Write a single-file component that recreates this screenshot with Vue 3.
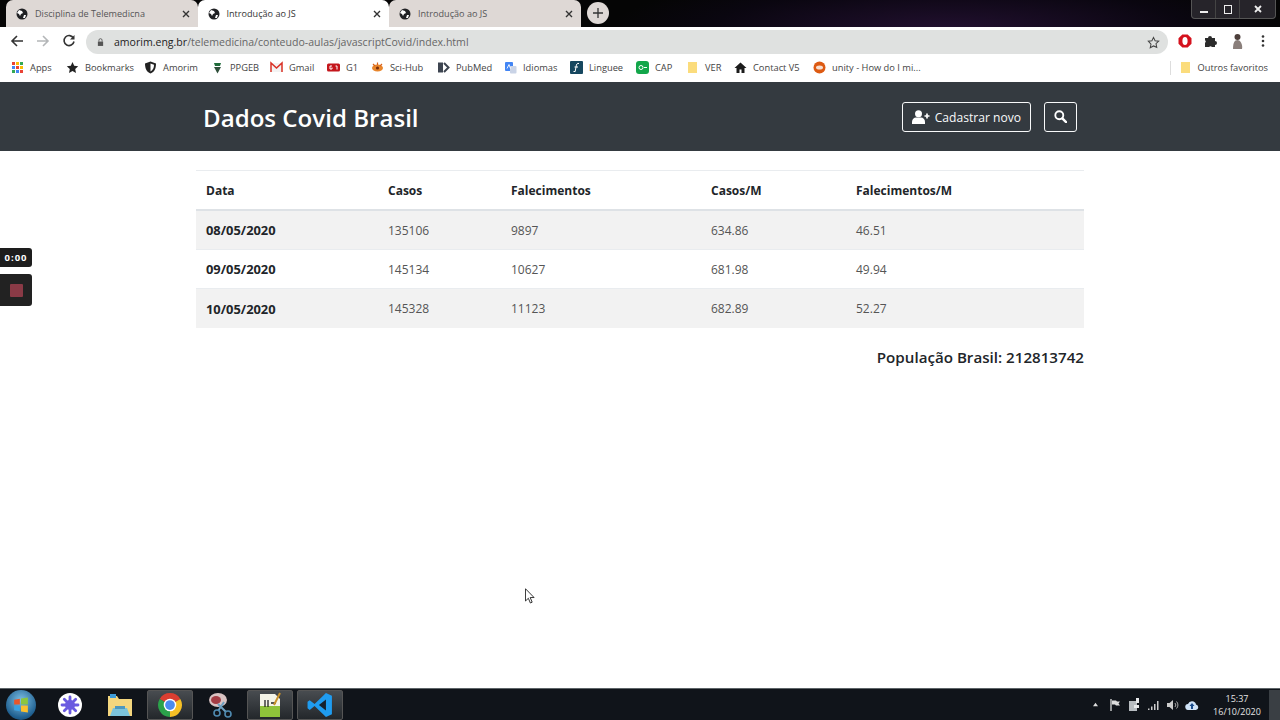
<script setup>
const tabs = [
  { title: 'Disciplina de Telemedicna', active: false },
  { title: 'Introdução ao JS', active: true },
  { title: 'Introdução ao JS', active: false },
];

const bookmarks = ['Apps', 'Bookmarks', 'Amorim', 'PPGEB', 'Gmail', 'G1', 'Sci-Hub', 'PubMed', 'Idiomas', 'Linguee', 'CAP', 'VER', 'Contact V5', 'unity - How do I mi...'];

const columns = ['Data', 'Casos', 'Falecimentos', 'Casos/M', 'Falecimentos/M'];

const rows = [
  { date: '08/05/2020', cases: 135106, deaths: 9897, casesM: '634.86', deathsM: '46.51' },
  { date: '09/05/2020', cases: 145134, deaths: 10627, casesM: '681.98', deathsM: '49.94' },
  { date: '10/05/2020', cases: 145328, deaths: 11123, casesM: '682.89', deathsM: '52.27' },
];
</script>

<template>
  <div class="screen">
    <div class="tabstrip">
      <div v-for="tab in tabs" :key="tab.title + tab.active" class="tab" :class="{ active: tab.active }">
        <svg class="globe" viewBox="0 0 12 12">
          <circle cx="6" cy="6" r="5.5" fill="#202124" />
          <path d="M3 2l3 1 1 2-2 1-1 2-1-2-2-1zM8 7l2 0-1 3-2 0z" fill="#fff" />
        </svg>
        <span class="tab-title">{{ tab.title }}</span>
        <svg class="tab-x" viewBox="0 0 8 8"><path d="M1 1l6 6M7 1l-6 6" stroke="#333" stroke-width="1.4" /></svg>
      </div>
      <div class="newtab">
        <svg viewBox="0 0 10 10" width="10" height="10"><path d="M5 0v10M0 5h10" stroke="#333" stroke-width="1.3" /></svg>
      </div>
      <div class="winctl">
        <span class="winbtn"><i class="min"></i></span>
        <span class="winbtn"><i class="max"></i></span>
        <span class="winbtn close">
          <svg viewBox="0 0 8 8" width="8" height="8"><path d="M1 1l6 6M7 1l-6 6" stroke="#eee" stroke-width="1.8" /></svg>
        </span>
      </div>
    </div>

    <div class="toolbar">
      <div class="nav-tools">
        <svg class="tool" viewBox="0 0 14 14"><path d="M13 7H2M7 2L2 7l5 5" fill="none" stroke="#333" stroke-width="1.6" /></svg>
        <svg class="tool" viewBox="0 0 14 14"><path d="M1 7h11M7 2l5 5-5 5" fill="none" stroke="#b4b6b8" stroke-width="1.6" /></svg>
        <svg class="tool" viewBox="0 0 14 14"><path d="M11.5 4.2A5 5 0 1 0 12 7.5" fill="none" stroke="#333" stroke-width="1.6" /><path d="M12.5 1v4.5H8z" fill="#333" /></svg>
      </div>
      <div class="omnibox">
        <svg class="lock" viewBox="0 0 8 10"><path d="M1 4.5h6v5H1z" fill="#555" /><path d="M2.2 4.5V3a1.8 1.8 0 0 1 3.6 0v1.5" fill="none" stroke="#555" /></svg>
        <span class="url"><b>amorim.eng.br</b>/telemedicina/conteudo-aulas/javascriptCovid/index.html</span>
        <svg class="star" viewBox="0 0 14 14"><path d="M7 1.5l1.7 3.6 3.9.5-2.9 2.7.8 3.9L7 10.7l-3.5 1.9.8-3.9L1.4 5.6l3.9-.5z" fill="none" stroke="#444" stroke-width="1.1" /></svg>
      </div>
      <div class="extensions">
        <svg viewBox="0 0 14 14" width="14" height="14">
          <path d="M4.3.5h5.4l3.8 3.8v5.4l-3.8 3.8H4.3L.5 9.700V4.300z" fill="#d5121e" />
          <ellipse cx="7" cy="7" rx="2.6" ry="4" fill="#fff" />
        </svg>
        <svg viewBox="0 0 14 14" width="14" height="14">
          <path d="M1 4h3a2 2 0 0 1 4 0h3v3a2 2 0 0 1 0 4v2H8a2 2 0 0 0-3 0H1V9a2 2 0 0 0 0-3z" fill="#2b2b2b" />
        </svg>
        <svg viewBox="0 0 14 16" width="14" height="16">
          <circle cx="7.500" cy="4" r="3" fill="#4d3f3b" />
          <path d="M3 16c0-6 1.500-9 4.500-9S13 12 12 16z" fill="#8a7f7b" />
        </svg>
        <svg viewBox="0 0 14 14" width="14" height="14"><circle cx="7" cy="2.500" r="1.300" fill="#333" /><circle cx="7" cy="7" r="1.300" fill="#333" /><circle cx="7" cy="11.500" r="1.300" fill="#333" /></svg>
      </div>
    </div>

    <div class="bookmarks">
      <div class="bm-list">
        <div v-for="(name, i) in bookmarks" :key="name" class="bm">
          <svg viewBox="0 0 13 13" width="13" height="13">
            <g v-if="i === 0">
              <rect x="1" y="1" width="3" height="3" fill="#ea4335" /><rect x="5" y="1" width="3" height="3" fill="#fbbc04" /><rect x="9" y="1" width="3" height="3" fill="#34a853" />
              <rect x="1" y="5" width="3" height="3" fill="#4285f4" /><rect x="5" y="5" width="3" height="3" fill="#ea4335" /><rect x="9" y="5" width="3" height="3" fill="#fbbc04" />
              <rect x="1" y="9" width="3" height="3" fill="#34a853" /><rect x="5" y="9" width="3" height="3" fill="#4285f4" /><rect x="9" y="9" width="3" height="3" fill="#ea4335" />
            </g>
            <path v-else-if="i === 1" d="M6.500 1l1.700 3.700 4 .5-3 2.700.8 4-3.500-2-3.500 2 .8-4-3-2.700 4-.5z" fill="#222" />
            <g v-else-if="i === 2">
              <path d="M6.500.5l5.500 2c0 5-1.500 8.500-5.500 10-4-1.500-5.500-5-5.500-10z" fill="#222" />
              <path d="M6.500 2.500l3.500 1.200c0 3-1 5.500-3.500 6.800z" fill="#fff" />
            </g>
            <g v-else-if="i === 3">
              <path d="M3 2h7l-1 3H4z" fill="#1f6b3a" /><path d="M3 6h7l-3.500 6.500z" fill="#2f4f3a" />
            </g>
            <g v-else-if="i === 4">
              <rect x="1" y="2" width="11" height="9" fill="#f3f3f3" />
              <path d="M1 11V2l5.500 5L12 2v9" fill="none" stroke="#d93025" stroke-width="1.500" />
            </g>
            <g v-else-if="i === 5">
              <rect y="2.500" width="13" height="8" rx="1.500" fill="#c4161c" />
              <path d="M5 5H3v3h2V6.500M8.500 5h1.500v3.500" fill="none" stroke="#fff" stroke-width="1" />
            </g>
            <g v-else-if="i === 6">
              <ellipse cx="6.500" cy="7" rx="5.500" ry="3.500" fill="#e8862c" />
              <circle cx="6.500" cy="7" r="1.600" fill="#7a2e0a" />
              <path d="M2 3l2 2M6.500 1.500v2.500M11 3L9 5" stroke="#d8621a" stroke-width="1.200" />
            </g>
            <g v-else-if="i === 7">
              <path d="M1 1.500h5v10H1z" fill="#3d4450" />
              <path d="M7 2l4.500 4.500L7 11" fill="none" stroke="#3d4450" stroke-width="2" />
            </g>
            <g v-else-if="i === 8">
              <rect x="1" y="1" width="8" height="9" rx="1" fill="#4285f4" />
              <rect x="6" y="5" width="6.500" height="7.500" rx="1" fill="#c9d3e6" />
              <path d="M3 7.500l2-4 1.500 4" fill="none" stroke="#fff" stroke-width=".9" />
            </g>
            <g v-else-if="i === 9">
              <rect width="13" height="13" rx="1" fill="#16475f" />
              <path d="M9 2.500C7 2 6.500 3 6 6l-.8 4.500H3.500M4.500 6h3.500" fill="none" stroke="#fff" stroke-width="1" />
            </g>
            <g v-else-if="i === 10">
              <rect width="13" height="13" rx="3" fill="#12a64a" />
              <circle cx="5" cy="6.500" r="2" fill="none" stroke="#fff" />
              <path d="M8 6.500h3" stroke="#fff" />
            </g>
            <path v-else-if="i === 11" d="M2 1h9v11H2z" fill="#fbdc7c" />
            <path v-else-if="i === 12" d="M6.500 1.500L.5 7h2v5h3V8.500h2V12h3V7h2z" fill="#1c1c1c" />
            <g v-else>
              <circle cx="6.500" cy="6.500" r="6" fill="#dd5a12" />
              <ellipse cx="6.500" cy="6.500" rx="3.500" ry="2" fill="#fff" opacity=".8" />
            </g>
          </svg>
          <span>{{ name }}</span>
        </div>
      </div>
      <div class="bm other">
        <svg viewBox="0 0 13 13" width="13" height="13"><path d="M2 1h9v11H2z" fill="#fbdc7c" /></svg>
        <span>Outros favoritos</span>
      </div>
    </div>

    <header class="navbar">
      <h1 class="brand">Dados Covid Brasil</h1>
      <div class="actions">
        <button class="btn">
          <svg viewBox="0 0 18 14" width="18" height="14">
            <circle cx="6.500" cy="3.700" r="3.500" fill="#fff" />
            <path d="M0 14v-2c0-3 2-4.500 4-4.500h5c2 0 4 1.500 4 4.500v2z" fill="#fff" />
            <path d="M15 3.500v5M12.500 6h5" stroke="#fff" stroke-width="1.700" />
          </svg>
          Cadastrar novo
        </button>
        <button class="btn icon">
          <svg viewBox="0 0 14 14" width="13" height="13">
            <circle cx="5.700" cy="5.700" r="4.300" fill="none" stroke="#fff" stroke-width="2" />
            <path d="M9 9l4 4" stroke="#fff" stroke-width="2.500" stroke-linecap="round" />
          </svg>
        </button>
      </div>
    </header>

    <main class="content">
      <table class="table">
        <colgroup>
          <col class="col-date" /><col class="col-cases" /><col class="col-deaths" /><col class="col-cases-m" /><col class="col-deaths-m" />
        </colgroup>
        <thead>
          <tr><th v-for="c in columns" :key="c">{{ c }}</th></tr>
        </thead>
        <tbody>
          <tr v-for="row in rows" :key="row.date">
            <th>{{ row.date }}</th>
            <td>{{ row.cases }}</td>
            <td>{{ row.deaths }}</td>
            <td>{{ row.casesM }}</td>
            <td>{{ row.deathsM }}</td>
          </tr>
        </tbody>
      </table>
      <h5 class="population">População Brasil: 212813742</h5>
    </main>

    <div class="taskbar">
      <div class="orb">
        <svg viewBox="0 0 14 14" width="16" height="16">
          <path d="M1 2.500l5-1v5H1z" fill="#e8562a" /><path d="M7 1.300l6-.8V6.500H7z" fill="#8cc63f" />
          <path d="M1 7.500h5v5l-5-1z" fill="#3aa0e0" /><path d="M7 7.500h6v6l-6-.8z" fill="#fbc02d" />
        </svg>
      </div>
      <div class="task">
        <svg viewBox="0 0 24 24" width="24" height="24">
          <circle cx="12" cy="12" r="12" fill="#fff" />
          <circle cx="12" cy="12" r="5" fill="#6a5ae0" />
          <path d="M12 4v16M4 12h16M6.300 6.300l11.400 11.400M17.700 6.300L6.300 17.700" stroke="#6a5ae0" stroke-width="2.800" stroke-linecap="round" />
        </svg>
      </div>
      <div class="task">
        <svg viewBox="0 0 26 24" width="26" height="24">
          <path d="M1 3h9l2 3h13v17H1z" fill="#f3d67e" />
          <rect x="3" y="1" width="6" height="4" fill="#3d9bd8" />
          <path d="M6 15h14l3 8H3z" fill="#7cc4dc" />
          <rect x="8" y="13" width="10" height="3" fill="#4c97bf" />
        </svg>
      </div>
      <div class="task open">
        <svg viewBox="0 0 24 24" width="26" height="26">
          <path d="M12 12L2.470 6.500A11 11 0 0 1 21.530 6.500z" fill="#dc3e31" />
          <path d="M12 12L21.530 6.500A11 11 0 0 1 12 23z" fill="#f6c026" />
          <path d="M12 12L12 23A11 11 0 0 1 2.470 6.500z" fill="#2ba24a" />
          <circle cx="12" cy="12" r="5.800" fill="#fff" />
          <circle cx="12" cy="12" r="4.500" fill="#4a8bf0" />
        </svg>
      </div>
      <div class="task">
        <svg viewBox="0 0 24 26" width="24" height="26">
          <ellipse cx="10" cy="8" rx="9" ry="7" fill="#d8c2c2" />
          <ellipse cx="8" cy="8" rx="5" ry="4" fill="#a33c44" />
          <path d="M10 12l8 8M16 10l-6 9" stroke="#6d9fbf" stroke-width="2" />
          <circle cx="9" cy="21" r="3" fill="none" stroke="#4f8ab0" stroke-width="1.600" />
          <circle cx="20" cy="22" r="3" fill="none" stroke="#4f8ab0" stroke-width="1.600" />
        </svg>
      </div>
      <div class="task open">
        <svg viewBox="0 0 24 26" width="24" height="26">
          <path d="M2 2h15l5 5v18H2z" fill="#f4f4e8" />
          <path d="M2 14h20v11H2z" fill="#8fc33a" />
          <path d="M7 8v7M10 8v7M13 11h5" stroke="#222" stroke-width="1.300" />
          <path d="M22 1l-6 12" stroke="#c9932c" stroke-width="2" />
        </svg>
      </div>
      <div class="task open">
        <svg viewBox="0 0 24 24" width="26" height="26">
          <path d="M17.500 1L23 3.500v17L17.500 23 7 13l-4.500 3.500L.5 15V9l2-1.500L7 11z" fill="#1f9cf0" />
          <path d="M17.500 7L11 12l6.500 5z" fill="#16202c" />
        </svg>
      </div>

      <div class="tray">
        <div class="tray-icons">
          <svg viewBox="0 0 8 6" width="7" height="5"><path d="M4 1l3 4H1z" fill="#ddd" /></svg>
          <svg viewBox="0 0 12 12" width="12" height="12"><path d="M2 0v12" stroke="#ddd" stroke-width="1.300" /><path d="M3 1.500h4l1 1h3l-1.500 2L11 6.500H7l-1-1H3z" fill="#ddd" /></svg>
          <svg viewBox="0 0 12 14" width="12" height="14"><rect x="1" y="3" width="8" height="10" fill="#b7bcc0" /><path d="M8 0v5h3V0zM6 7h5v3H6z" fill="#e8eaec" /></svg>
          <svg viewBox="0 0 13 10" width="13" height="10"><path d="M1 8.500h1.500V10H1zM4 6.500h1.500V10H4zM7 4h1.500v6H7zM10 1h1.500v9H10z" fill="#ccc" /></svg>
          <svg viewBox="0 0 13 12" width="13" height="12"><path d="M1 4h2.500L7 1v10L3.500 8H1z" fill="#ccc" /><path d="M9 4a3 3 0 0 1 0 4M10.500 2.500a5 5 0 0 1 0 7" fill="none" stroke="#aaa" /></svg>
          <svg viewBox="0 0 14 10" width="14" height="10"><path d="M3.500 10a3 3 0 0 1-.5-6 4.200 4.200 0 0 1 8 .5A2.800 2.800 0 0 1 11 10z" fill="#cfe3f8" /><path d="M7 3l2.500 3H8v3H6V6H4.500z" fill="#1a4c8c" /></svg>
        </div>
        <div class="clock">
          <span>15:37</span>
          <span>16/10/2020</span>
        </div>
      </div>
      <div class="show-desktop"></div>
    </div>

    <div class="rec-time">0:00</div>
    <div class="rec-stop"><i></i></div>
    <svg class="cursor" viewBox="0 0 11 17" width="10" height="16">
      <path d="M.5.500v13.500l3.200-3 2.200 5.200 2-.9-2.200-5.100h4.300z" fill="#fff" stroke="#222" stroke-width="1" />
    </svg>
  </div>
</template>

<style>
html, body {
  margin: 0;
  background: #fff;
}
</style>

<style scoped>
.screen {
  position: relative;
  display: flex;
  flex-direction: column;
  width: 1280px;
  height: 720px;
  overflow: hidden;
  font-family: "Open Sans", "Noto Sans", sans-serif;
  color: #212529;
}

.tabstrip {
  display: flex;
  align-items: flex-end;
  height: 27px;
  flex: none;
  padding-left: 6px;
  background: radial-gradient(ellipse 340px 60px at 950px 30px, #221030 0%, #0a0610 70%, #050505 100%), #050505;
}
.tab {
  display: flex;
  align-items: center;
  width: 191.500px;
  height: 27px;
  box-sizing: border-box;
  padding: 0 8px 0 10px;
  background: #ded8d5;
  border-radius: 7px 7px 0 0;
  font-size: 9.100px;
  color: #555;
}
.tab.active {
  background: #fff;
  color: #333;
}
.globe {
  width: 12px;
  height: 12px;
  flex: none;
}
.tab-title {
  flex: 1;
  margin-left: 7px;
  white-space: nowrap;
}
.tab-x {
  width: 8px;
  height: 8px;
  flex: none;
}
.newtab {
  display: flex;
  align-items: center;
  justify-content: center;
  width: 22px;
  height: 22px;
  margin: 0 0 3px 6px;
  border-radius: 50%;
  background: #ded8d5;
}
.winctl {
  display: flex;
  align-self: flex-start;
  margin-left: auto;
  margin-right: 4px;
  height: 18px;
  border: 1px solid #555;
  border-top: none;
  border-radius: 0 0 4px 4px;
  background: #26242a;
}
.winbtn {
  display: flex;
  align-items: center;
  justify-content: center;
  width: 23px;
  border-right: 1px solid #444;
}
.winbtn.close {
  width: 35px;
  border-right: none;
}
.min {
  width: 8px;
  height: 2px;
  margin-top: 6px;
  background: #eee;
}
.max {
  width: 6px;
  height: 7px;
  border: 1.500px solid #eee;
}

.toolbar {
  display: flex;
  align-items: center;
  height: 28px;
  flex: none;
  padding-left: 10px;
  background: #fff;
}
.nav-tools {
  display: flex;
  gap: 12px;
  width: 76px;
  flex: none;
}
.tool {
  width: 14px;
  height: 14px;
  flex: none;
}
.omnibox {
  display: flex;
  align-items: center;
  flex: none;
  width: 1082px;
  height: 24px;
  margin-top: 2px;
  box-sizing: border-box;
  padding: 0 8px 0 11px;
  border-radius: 12px;
  background: #dfe1e0;
}
.lock {
  width: 7px;
  height: 10px;
}
.url {
  flex: 1;
  margin-left: 10px;
  font-size: 10.550px;
  color: #666;
  white-space: nowrap;
}
.url b {
  font-weight: 400;
  color: #222;
}
.star {
  width: 13px;
  height: 13px;
}
.extensions {
  display: flex;
  align-items: center;
  gap: 12px;
  margin-left: 10px;
}

.bookmarks {
  display: flex;
  justify-content: space-between;
  align-items: center;
  height: 26px;
  flex: none;
  padding: 0 12px 1px 11px;
  background: #fff;
  box-sizing: border-box;
  font-size: 9.300px;
  color: #444;
}
.bm-list {
  display: grid;
  grid-template-columns: 55px 78px 67px 59px 57px 44px 66px 67px 66px 66px 50px 48px 79px auto;
}
.bm {
  display: flex;
  align-items: center;
  gap: 6px;
  white-space: nowrap;
}
.other {
  padding-left: 8px;
  border-left: 1px solid #ddd;
  height: 14px;
}

.navbar {
  display: flex;
  align-items: center;
  justify-content: space-between;
  height: 69px;
  flex: none;
  margin-top: 1px;
  padding: 0 203px;
  background: #343a40;
  color: #fff;
}
.brand {
  margin: 2px 0 0;
  font-size: 24.100px;
  font-weight: 600;
}
.actions {
  display: flex;
  gap: 13px;
}
.btn {
  display: flex;
  align-items: center;
  gap: 5px;
  height: 30px;
  padding: 1px 9px 0;
  border: 1px solid #f8f9fa;
  border-radius: 3px;
  background: transparent;
  color: #f8f9fa;
  font-family: inherit;
  font-size: 12.100px;
}
.btn.icon {
  width: 33px;
  justify-content: center;
  padding: 0;
}

.content {
  flex: 1;
  padding: 19px 196px 0;
}
.table {
  width: 888px;
  border-collapse: collapse;
  table-layout: fixed;
  font-size: 12px;
}
.col-date {
  width: 182px;
}
.col-cases {
  width: 123px;
}
.col-deaths {
  width: 200px;
}
.col-cases-m {
  width: 145px;
}
.col-deaths-m {
  width: 238px;
}
.table th,
.table td {
  height: 39.300px;
  padding: 1px 10px 0;
  box-sizing: border-box;
  text-align: left;
  border-top: 1px solid #e9ecef;
}
.table th {
  font-weight: 700;
  color: #212529;
}
.table tbody th {
  font-size: 12.900px;
}
.table td {
  color: #555;
}
.table thead th {
  border-bottom: 2px solid #dee2e6;
}
.table tbody tr:nth-child(odd) {
  background: #f2f2f2;
}
.population {
  margin: 19px 0 0;
  text-align: right;
  font-size: 15.150px;
  font-weight: 600;
}

.taskbar {
  display: flex;
  align-items: center;
  height: 32px;
  flex: none;
  box-sizing: border-box;
  padding-left: 6px;
  border-top: 1px solid #5d6468;
  background: #10141a;
}
.orb {
  display: flex;
  align-items: center;
  justify-content: center;
  flex: none;
  width: 30px;
  height: 30px;
  margin-right: 11px;
  border-radius: 50%;
  background: radial-gradient(circle at 50% 35%, #7ec0e6, #1f5f8f 70%, #123c5c);
}
.task {
  display: flex;
  align-items: center;
  justify-content: center;
  width: 46px;
  height: 30px;
  margin-right: 4px;
  box-sizing: border-box;
}
.task.open {
  border: 1px solid #555;
  border-radius: 2px;
  background: linear-gradient(#484c50, #23272b);
}
.tray {
  display: flex;
  align-items: center;
  gap: 5px;
  margin-left: auto;
  color: #e4e4e4;
}
.tray-icons {
  display: grid;
  grid-template-columns: repeat(6, 19.400px);
  justify-items: center;
  align-items: center;
}
.clock {
  display: flex;
  flex-direction: column;
  align-items: center;
  width: 60px;
  font-size: 9px;
  line-height: 13px;
}
.show-desktop {
  width: 11px;
  height: 30px;
  margin-left: 2px;
  background: #3a3f44;
}

.rec-time {
  position: absolute;
  left: 0;
  top: 248px;
  width: 32px;
  height: 19px;
  border-radius: 0 3px 3px 0;
  background: #1d1d1d;
  color: #fff;
  font-size: 9.500px;
  font-weight: 700;
  letter-spacing: 1px;
  line-height: 19px;
  text-align: center;
}
.rec-stop {
  position: absolute;
  left: 0;
  top: 274px;
  display: flex;
  align-items: center;
  justify-content: center;
  width: 32px;
  height: 32px;
  border-radius: 0 3px 3px 0;
  background: #222;
}
.rec-stop i {
  width: 13px;
  height: 13px;
  background: #8a3a46;
  border-radius: 1px;
}
.cursor {
  position: absolute;
  left: 525px;
  top: 588px;
}
</style>
